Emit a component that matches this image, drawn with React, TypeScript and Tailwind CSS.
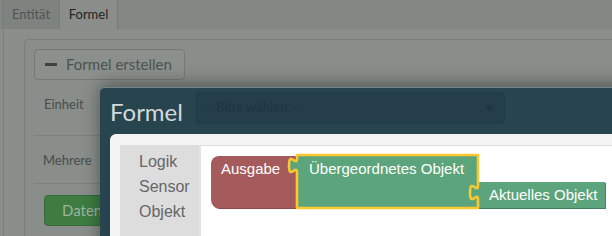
import React from "react";

function Blocks() {
  return (
    <svg width="420" height="100" className="absolute left-0 top-0" style={{ overflow: "visible" }}>
      <g transform="translate(-201,-145)">
        {/* Ausgabe block */}
        <path d="M 212,164 a8,8 0 0 1 8,-8 H 298 V 208 H 220 a8,8 0 0 1 -8,-8 z" fill="#8a4a4a" />
        <path d="M 211,163 a8,8 0 0 1 8,-8 H 297 V 207 H 219 a8,8 0 0 1 -8,-8 z" fill="#a55b5b" />
        {/* child block Aktuelles Objekt */}
        <path d="M 479,182 H 606 V 208 H 479 V 200 c 0,-10 -8,8 -8,-7.5 s 8,2.5 8,-7.5 z" fill="#467f5f" />
        <path d="M 478,181 H 605 V 207 H 478 V 199 c 0,-10 -8,8 -8,-7.5 s 8,2.5 8,-7.5 z" fill="#5ca57c" />
        {/* selected green block */}
        <path
          d="M 297,154 H 478 V 181 v 3 c 0,10 -8,-8 -8,7.5 s 8,-2.5 8,7.5 V 207 H 297 V 172 c 0,-10 -8,8 -8,-7.5 s 8,2.5 8,-7.5 z"
          fill="#5ca57c"
          stroke="#fdc82f"
          strokeWidth="2.6"
          strokeLinejoin="round"
        />
        <g fontFamily="'Liberation Sans', Arial, sans-serif" fontSize="15" fill="#ffffff">
          <text x="221" y="173">Ausgabe</text>
          <text x="309" y="173">Übergeordnetes Objekt</text>
          <text x="489" y="199">Aktuelles Objekt</text>
        </g>
      </g>
    </svg>
  );
}

export default function App() {
  return (
    <div className="relative w-[612px] h-[236px] overflow-hidden bg-[#8a8f8b] font-['Lato',sans-serif]">
      {/* tab bar */}
      <div className="flex h-[29px] bg-[#838884] pl-[2px]">
        <div className="w-[58px] h-full flex items-center justify-center bg-[#7e837f] border-l border-r border-[#777c78] text-[13px] text-[#4e5552]">
          Entität
        </div>
        <div className="w-[58px] h-[30px] flex items-center justify-center bg-[#898e8a] border-r border-[#777c78] text-[13px] text-[#1f2522]">
          Formel
        </div>
      </div>
      {/* content */}
      <div className="ml-[3px] border-l border-[#7c817d] pt-[10px] pl-[20px] h-[207px]">
        <div className="h-full rounded-tl-[5px] border-l border-t border-[#7a7f7b] pl-[9px] pt-[9px] bg-[#898e8a]">
          <div className="w-[151px] h-[31px] rounded-[4px] border border-[#757a76] bg-[#8b908c] flex items-center pl-[10px] gap-[9px]">
            <div className="w-[12px] h-[3px] bg-[#3c423f]" />
            <span className="text-[15px] text-[#4a5350]">Formel erstellen</span>
          </div>
          <div className="h-[56px] border-b border-[#7c817d] pt-[15px] pl-[10px] text-[13px] text-[#474d4a]">
            Einheit
          </div>
          <div className="h-[48px] border-b border-[#7c817d] pt-[15px] pl-[9px] text-[13px] text-[#474d4a]">
            Mehrere
          </div>
          <div className="pt-[11px] pl-[10px]">
            <div className="w-[130px] h-[31px] rounded-[4px] border border-[#356a38] bg-[#3e7c41] flex items-center pl-[17px] text-[15px] text-[#9fb3a1]">
              Daten-Q
            </div>
          </div>
        </div>
      </div>

      {/* modal */}
      <div className="absolute left-[100px] top-[87px] w-[540px] h-[170px] rounded-tl-[5px] border-t border-[#6b898f] bg-[#27444f] shadow-[0_-3px_18px_rgba(0,0,0,0.4)] flex flex-col">
        <div className="h-[46px] flex items-start pl-[10px]">
          <div className="mt-[9px] text-[24px] leading-[30px] text-[#d3d9da]">Formel</div>
          <div className="ml-[13px] mt-[4px] w-[309px] h-[32px] rounded-[4px] border border-[#213b45] bg-[#253f4a] flex items-center justify-between pl-[6px] pr-[10px]">
            <span className="text-[13px] text-[#1c3541]">-- Bitte wählen --</span>
            <svg width="9" height="7" viewBox="0 0 9 7">
              <rect x="0" y="0" width="9" height="1.2" fill="#1c3541" />
              <path d="M0 2 H9 L4.5 6.5 Z" fill="#1c3541" />
            </svg>
          </div>
        </div>
        <div className="flex-1 ml-[10px] rounded-tl-[6px] bg-[#f4f4f4] pt-[11px] pl-[10px] flex flex-col">
          <div className="flex-1 flex border-t border-[#dedede] bg-white">
            <div className="w-[81px] bg-[#dddddd] border-r-2 border-[#e4e4e4] pt-[3px] pl-[19px] font-['Liberation_Sans',Arial,sans-serif] text-[16px] leading-[25px] text-[#666666]">
              <div>Logik</div>
              <div>Sensor</div>
              <div>Objekt</div>
            </div>
            <div className="relative flex-1">
              <Blocks />
            </div>
          </div>
        </div>
      </div>
    </div>
  );
}
